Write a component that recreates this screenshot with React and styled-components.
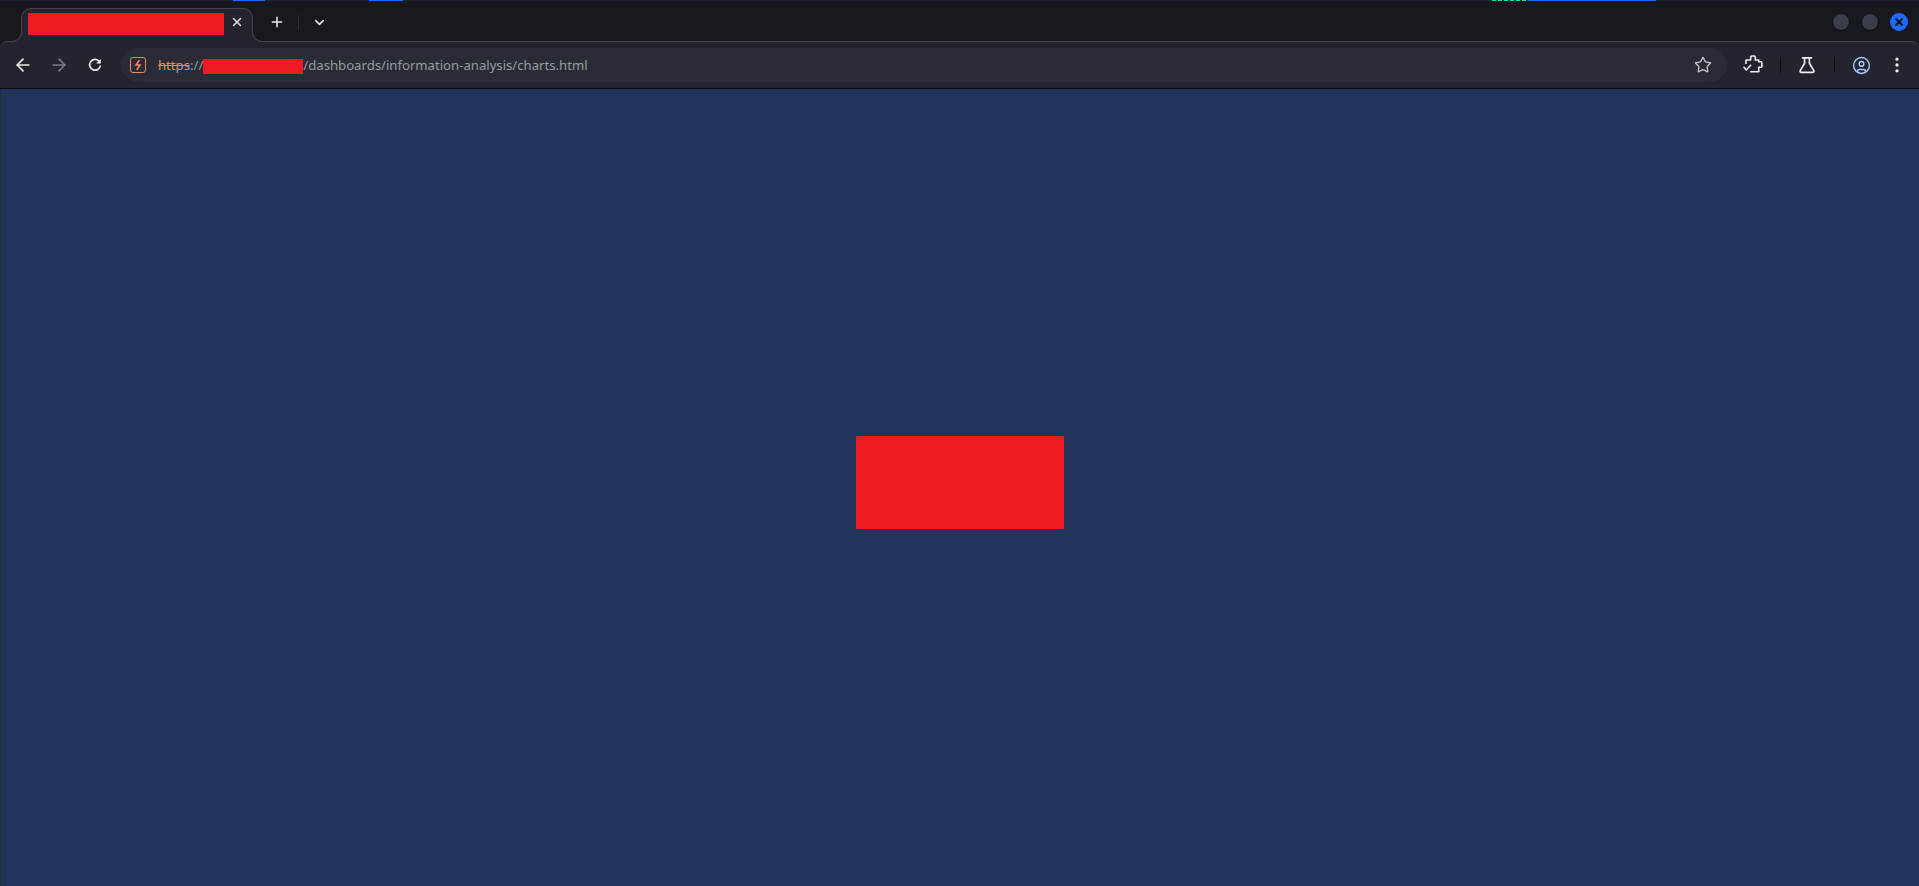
import React from 'react'
import styled, { createGlobalStyle } from 'styled-components'
import { ArrowLeft, ArrowRight, Plus, ChevronDown, X, Star, CircleUser, EllipsisVertical } from 'lucide-react'

const Colors = {
    frame: '#17191e',
    toolbar: '#22252e',
    omnibox: '#292b36',
    line: '#44464e',
    page: '#21335c',
    redacted: '#ed1c24',
    orange: '#ee8a5c',
    blue: '#1f6bff',
}

const GlobalStyle = createGlobalStyle`
    html, body {
        margin: 0;
        height: 100%;
        background: ${Colors.frame};
        font-family: "Noto Sans", "Open Sans", sans-serif;
    }

    #root {
        height: 100%;
    }
`

const Window = styled.div`
    display: flex;
    flex-direction: column;
    height: 886px;
    overflow: hidden;
`

const TopStrip = styled.div`
    display: flex;
    flex: none;
    height: 1px;
    background: #1e2230;
`

const StripSegment = styled.div`
    flex: none;
    width: ${props => props.$width}px;
    margin-left: ${props => props.$gap}px;
    background: ${props => props.$dashed
        ? 'repeating-linear-gradient(90deg, #00e5b0 0 4px, transparent 4px 6px)'
        : Colors.blue};
`

const TabBar = styled.div`
    display: flex;
    flex: none;
    align-items: flex-end;
    height: 40px;
    padding-left: 21px;
    position: relative;
    z-index: 1;
`

const Tab = styled.div`
    display: flex;
    align-items: center;
    box-sizing: border-box;
    position: relative;
    width: 232px;
    height: 34px;
    margin-bottom: -1px;
    padding: 0 0 3px 6px;
    background: ${Colors.toolbar};
    border: 1px solid ${Colors.line};
    border-bottom: none;
    border-radius: 10px 10px 0 0;

    &::before,
    &::after {
        content: '';
        position: absolute;
        bottom: 0;
        width: 10px;
        height: 10px;
        border-bottom: 1px solid ${Colors.line};
    }

    &::before {
        left: -11px;
        border-right: 1px solid ${Colors.line};
        border-bottom-right-radius: 10px;
        box-shadow: 4px 4px 0 4px ${Colors.toolbar};
        clip-path: inset(0 0 0 0);
    }

    &::after {
        right: -11px;
        border-left: 1px solid ${Colors.line};
        border-bottom-left-radius: 10px;
        box-shadow: -4px 4px 0 4px ${Colors.toolbar};
        clip-path: inset(0 0 0 0);
    }
`

const Redacted = styled.div`
    flex: none;
    width: ${props => props.$width}px;
    height: ${props => props.$height}px;
    background: ${Colors.redacted};
`

const UrlRedacted = styled(Redacted)`
    margin-top: 2px;
`

const TabClose = styled.span`
    display: flex;
    justify-content: center;
    width: 26px;
    margin-bottom: 4px;
    color: #e6e7ea;
`

const TabButton = styled.span`
    display: flex;
    align-items: center;
    justify-content: center;
    width: 22px;
    height: 22px;
    margin: 2px 0 0 ${props => props.$gap}px;
    align-self: center;
    color: #eceded;
`

const TabDivider = styled.span`
    width: 1px;
    height: 15px;
    align-self: center;
    margin-left: 10px;
    margin-top: 2px;
    background: #2e3037;
`

const WindowControls = styled.div`
    display: flex;
    align-items: center;
    gap: 11px;
    align-self: center;
    margin-left: auto;
    margin-top: 2px;
    padding-right: 11px;
`

const WindowDot = styled.span`
    display: flex;
    align-items: center;
    justify-content: center;
    box-sizing: border-box;
    width: 18px;
    height: 18px;
    border-radius: 50%;
    background: ${props => props.$active ? Colors.blue : '#3a3e4c'};
    border: 1px solid ${props => props.$active ? Colors.blue : '#0e0f12'};
    color: #0c1220;
`

const Toolbar = styled.div`
    display: flex;
    flex: none;
    align-items: center;
    box-sizing: border-box;
    height: 48px;
    padding: 0 8px 0 14px;
    background: ${Colors.toolbar};
    border-top: 1px solid ${Colors.line};
    border-bottom: 1px solid #0b0c10;
    border-radius: 8px 8px 0 0;
`

const NavButton = styled.span`
    display: flex;
    flex: none;
    align-items: center;
    justify-content: center;
    width: 18px;
    height: 18px;
    margin-right: 18px;
    color: ${props => props.$muted ? '#777a83' : '#eceded'};

    svg {
        flex: none;
    }
`

const Omnibox = styled.div`
    display: flex;
    flex: none;
    align-items: center;
    box-sizing: border-box;
    width: 1606px;
    height: 34px;
    margin-left: -1px;
    padding: 0 14px 0 9px;
    background: ${Colors.omnibox};
    border-radius: 17px;
`

const SecurityBadge = styled.span`
    display: flex;
    flex: none;
    align-items: center;
    justify-content: center;
    box-sizing: border-box;
    width: 16px;
    height: 16px;
    margin-right: 12px;
    border: 1.5px solid ${Colors.orange};
    border-radius: 3px;
    color: ${Colors.orange};
`

const UrlText = styled.span`
    font-size: 13.15px;
    line-height: 20px;
    color: #9a9ba2;
    white-space: nowrap;
`

const Scheme = styled.span`
    color: ${Colors.orange};
    text-decoration: line-through;
`

const ToolIcon = styled.span`
    display: flex;
    flex: none;
    align-items: center;
    justify-content: center;
    width: 20px;
    height: 20px;
    margin-left: ${props => props.$gap}px;
    color: ${props => props.$color || '#eceded'};
`

const StarIcon = styled(ToolIcon)`
    margin-left: auto;
    color: #c7c8cc;
`

const ToolDivider = styled.span`
    flex: none;
    width: 1px;
    height: 16px;
    margin-left: ${props => props.$gap}px;
    background: #0e0f13;
`

const Page = styled.main`
    flex: 1;
    display: flex;
    align-items: center;
    justify-content: center;
    padding-bottom: 10px;
    background: ${Colors.page};
    border-left: 1px solid #2b2c31;
`

function ReloadIcon() {
    return (
        <svg width="20" height="20" viewBox="0 0 20 20" fill="none">
            <path d="M14.4 6.6A5.4 5.4 0 1 0 15.4 10.5" stroke="currentColor" strokeWidth="1.7" />
            <path d="M15.8 4v4.6h-4.6z" fill="currentColor" />
        </svg>
    )
}

function ExtensionIcon() {
    return (
        <svg width="20" height="20" viewBox="0 0 20 20" fill="none" stroke="currentColor" strokeWidth="1.6" strokeLinejoin="round">
            <path d="M3 9V5h4.7V2.2c0-.7.5-1.2 1.2-1.2h2.2c.7 0 1.2.5 1.2 1.2V5h3.4v1.7h2.1c.6 0 1.1.5 1.1 1.1v3.4c0 .6-.5 1.1-1.1 1.1h-2.1v4.4H7" />
            <path d="M1 12.3 3.3 15l4.4-4.7" strokeLinecap="round" />
        </svg>
    )
}

function LabsIcon() {
    return (
        <svg width="20" height="20" viewBox="0 0 20 20" fill="none" stroke="currentColor" strokeWidth="1.7" strokeLinejoin="round">
            <path d="M5.5 2.8h9" strokeLinecap="round" />
            <path d="M7.6 3v5.2L3.2 15.6c-.5.9.1 1.8 1.1 1.8h11.4c1 0 1.6-.9 1.1-1.8l-4.4-7.4V3" />
        </svg>
    )
}

export default function App() {
    return (
        <Window>
            <GlobalStyle />
            <TopStrip>
                <StripSegment $gap={233} $width={32} />
                <StripSegment $gap={104} $width={34} />
                <StripSegment $gap={1089} $width={34} $dashed />
                <StripSegment $gap={2} $width={128} />
            </TopStrip>
            <TabBar>
                <Tab>
                    <Redacted $width={196} $height={22} />
                    <TabClose><X size={14} strokeWidth={2.4} /></TabClose>
                </Tab>
                <TabButton $gap={13}><Plus size={16} strokeWidth={2.2} /></TabButton>
                <TabDivider />
                <TabButton $gap={9}><ChevronDown size={15} strokeWidth={2.4} /></TabButton>
                <WindowControls>
                    <WindowDot />
                    <WindowDot />
                    <WindowDot $active><X size={12} strokeWidth={3.6} /></WindowDot>
                </WindowControls>
            </TabBar>
            <Toolbar>
                <NavButton><ArrowLeft size={20} strokeWidth={2} /></NavButton>
                <NavButton $muted><ArrowRight size={20} strokeWidth={2} /></NavButton>
                <NavButton><ReloadIcon /></NavButton>
                <Omnibox>
                    <SecurityBadge>
                        <svg width="10" height="12" viewBox="0 0 10 12" fill="none" stroke="currentColor" strokeWidth="1.5">
                            <path d="M6.5 1 3 6h4L3.8 11" />
                        </svg>
                    </SecurityBadge>
                    <UrlText><Scheme>https</Scheme>://</UrlText>
                    <UrlRedacted $width={100} $height={15} />
                    <UrlText>/dashboards/information-analysis/charts.html</UrlText>
                    <StarIcon><Star size={18} strokeWidth={1.8} /></StarIcon>
                </Omnibox>
                <ToolIcon $gap={16}><ExtensionIcon /></ToolIcon>
                <ToolDivider $gap={17} />
                <ToolIcon $gap={16}><LabsIcon /></ToolIcon>
                <ToolDivider $gap={17} />
                <ToolIcon $gap={16} $color="#a8c7fa"><CircleUser size={19} strokeWidth={1.8} /></ToolIcon>
                <ToolIcon $gap={16}><EllipsisVertical size={20} strokeWidth={2} /></ToolIcon>
            </Toolbar>
            <Page>
                <Redacted $width={208} $height={93} />
            </Page>
        </Window>
    )
}
